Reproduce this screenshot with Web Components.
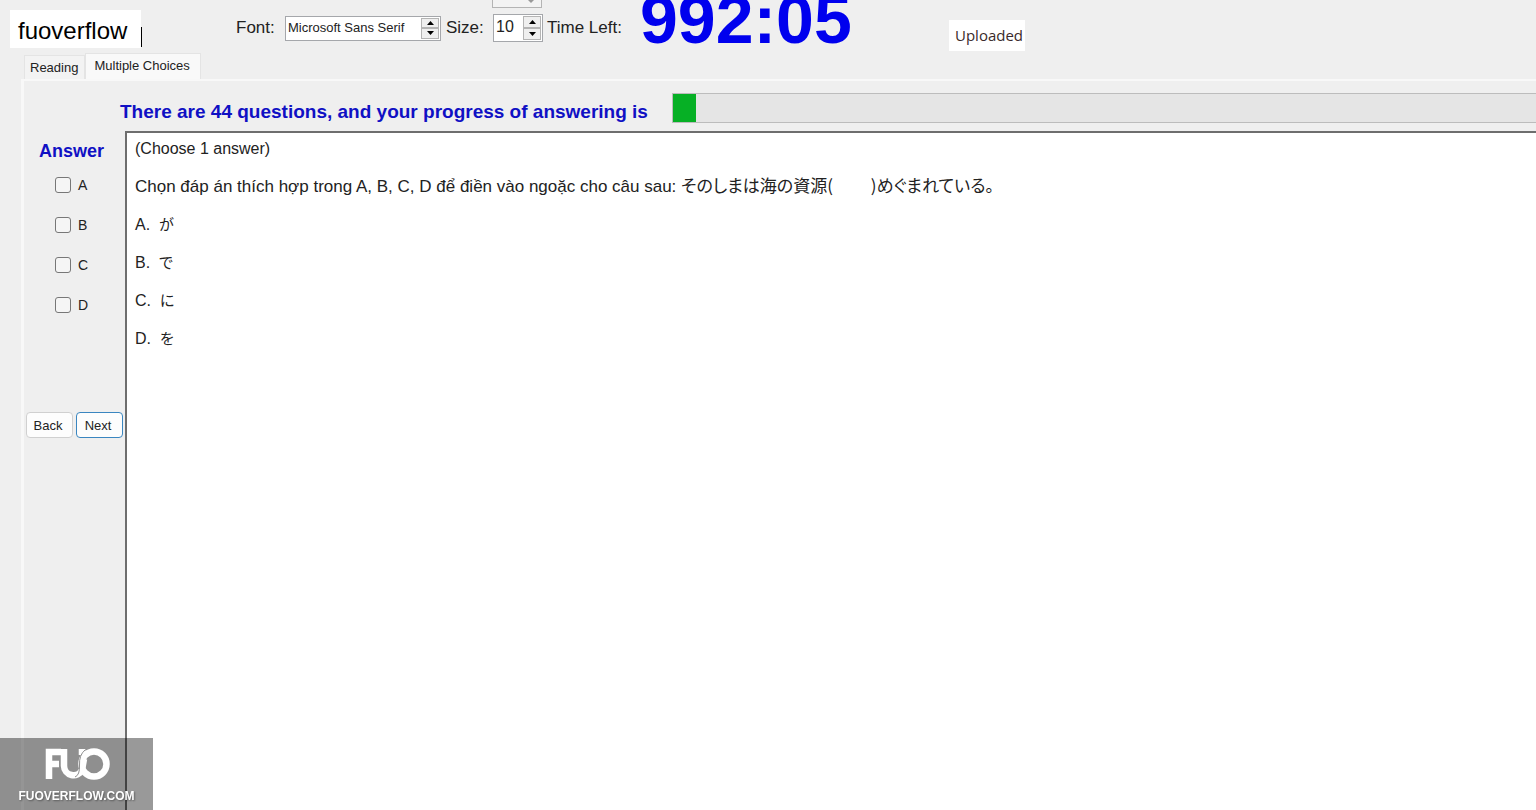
<!DOCTYPE html>
<html lang="vi">
<head>
<meta charset="utf-8">
<title>Multiple Choices</title>
<style>
  body {
    margin: 0;
    background: #efefef;
    color: #222;
    font-family: "Liberation Sans", "Noto Sans CJK JP", sans-serif;
    font-size: 13px;
  }
</style>
</head>
<body>
<exam-app></exam-app>

<script>
class SpinBox extends HTMLElement {
  constructor() {
    super();
    this.attachShadow({ mode: "open" });
    this.shadowRoot.innerHTML = `
      <style>
        :host { display: flex; align-items: center; color: #222; font-size: 17px; }
        .box {
          display: flex;
          box-sizing: border-box;
          width: var(--spin-width, 156px);
          height: var(--spin-height, 25px);
          padding: 1px;
          background: #fff;
          border: 1px solid #a5a7ab;
        }
        input {
          flex: 1;
          min-width: 0;
          padding: 0 0 2px 1px;
          border: 0;
          outline: 0;
          background: none;
          color: #222;
          font-family: inherit;
          font-size: var(--spin-font, 13px);
        }
        .arrows { display: flex; flex-direction: column; width: 18px; }
        button {
          flex: 1;
          display: flex;
          align-items: center;
          justify-content: center;
          min-height: 0;
          padding: 0;
          background: #efefef;
          border: 1px solid #b4b4b4;
        }
        svg { width: 7px; height: 4px; }
      </style>
      <label for="field"></label>
      <div class="box">
        <input id="field" type="text">
        <div class="arrows">
          <button type="button" aria-label="Up"><svg viewBox="0 0 7 4"><path d="M0 4 3.5 0 7 4z"/></svg></button>
          <button type="button" aria-label="Down"><svg viewBox="0 0 7 4"><path d="M0 0h7L3.5 4z"/></svg></button>
        </div>
      </div>
    `;
  }

  connectedCallback() {
    const label = this.shadowRoot.querySelector("label");
    label.textContent = this.getAttribute("label");
    label.style.width = this.getAttribute("label-width") + "px";
    this.shadowRoot.querySelector("input").value = this.getAttribute("value");
  }
}
customElements.define("spin-box", SpinBox);

class ExamHeader extends HTMLElement {
  constructor() {
    super();
    this.attachShadow({ mode: "open" });
    this.shadowRoot.innerHTML = `
      <style>
        :host { display: flex; align-items: center; height: 53px; padding-left: 10px; }
        .user {
          position: relative;
          width: 123px;
          height: 38px;
          padding-left: 8px;
          margin: 5px 95px 0 0;
          background: #fff;
          color: #000;
          font-size: 24px;
          line-height: 42px;
        }
        .user::after {
          content: "";
          position: absolute;
          left: 100%;
          bottom: 1px;
          width: 1px;
          height: 20px;
          background: #000;
        }
        .font { margin: 3px 5px 0 0; }
        .size {
          position: relative;
          margin: 3px 4px 0 0;
          --spin-width: 50px;
          --spin-height: 28px;
          --spin-font: 16px;
        }
        /* end of the row above, cut by the window edge */
        .size::before {
          content: "";
          position: absolute;
          right: 1px;
          bottom: calc(100% + 6px);
          box-sizing: border-box;
          width: 50px;
          height: 20px;
          background: #f3f3f3;
          border: 1px solid #b4b4b4;
        }
        .size::after {
          content: "";
          position: absolute;
          right: 8px;
          bottom: calc(100% + 11px);
          border: 4px solid transparent;
          border-top-color: #999;
          border-bottom: 0;
        }
        .left { width: 93px; padding-top: 3px; font-size: 17px; }
        .clock {
          width: 309px;
          padding-bottom: 15px;
          color: #00e;
          font-size: 68px;
          font-weight: bold;
          line-height: 38px;
        }
        .status {
          align-self: flex-end;
          width: 70px;
          margin-bottom: 2px;
          padding-left: 6px;
          background: #fff;
          color: #3a2a2a;
          font-family: "Open Sans", sans-serif;
          font-size: 15px;
          line-height: 31px;
        }
      </style>
      <div class="user">fuoverflow</div>
      <spin-box class="font" label="Font:" label-width="49" value="Microsoft Sans Serif"></spin-box>
      <spin-box class="size" label="Size:" label-width="47" value="10"></spin-box>
      <div class="left">Time Left:</div>
      <div class="clock">992:05</div>
      <div class="status">Uploaded</div>
    `;
  }
}
customElements.define("exam-header", ExamHeader);

class ExamTabs extends HTMLElement {
  constructor() {
    super();
    this.attachShadow({ mode: "open" });
    this.shadowRoot.innerHTML = `
      <style>
        :host { display: flex; flex-direction: column; flex: 1; margin-left: 21px; }
        nav { display: flex; align-items: flex-end; padding-left: 3px; }
        button {
          padding: 0 6px 0 5px;
          background: #f3f3f3;
          border: 1px solid #e4e4e4;
          border-bottom: 0;
          color: #222;
          font-family: inherit;
          font-size: 13px;
          line-height: 23px;
        }
        button[aria-selected=true] {
          padding: 0 10px 2px 8px;
          background: #f9f9f9;
        }
        .panel {
          display: flex;
          flex: 1;
          border-top: 2px solid #f8f8f8;
          border-left: 3px solid #f8f8f8;
        }
      </style>
      <nav role="tablist">
        <button type="button" role="tab" aria-selected="false">Reading</button>
        <button type="button" role="tab" aria-selected="true">Multiple Choices</button>
      </nav>
      <div class="panel" role="tabpanel"><slot></slot></div>
    `;
  }
}
customElements.define("exam-tabs", ExamTabs);

class ExamProgress extends HTMLElement {
  constructor() {
    super();
    this.attachShadow({ mode: "open" });
    this.shadowRoot.innerHTML = `
      <style>
        :host { display: flex; align-items: center; }
        label {
          flex: none;
          width: 552px;
          padding-top: 8px;
          color: #1010c4;
          font-size: 19px;
          font-weight: bold;
          line-height: 22px;
          white-space: nowrap;
        }
        progress {
          flex: 1;
          box-sizing: border-box;
          height: 30px;
          appearance: none;
          border: 1px solid #bcbcbc;
          border-right: 0;
          background: #e5e5e5;
        }
        progress::-webkit-progress-bar { background: #e5e5e5; }
        progress::-webkit-progress-value { background: #06b025; }
      </style>
      <label for="bar"><slot></slot></label>
      <progress id="bar" value="1" max="37"></progress>
    `;
  }
}
customElements.define("exam-progress", ExamProgress);

class AnswerPanel extends HTMLElement {
  constructor() {
    super();
    this.attachShadow({ mode: "open" });
    this.shadowRoot.innerHTML = `
      <style>
        :host { display: block; }
        h2 {
          margin: 10px 0 13px 15px;
          color: #1010c4;
          font-size: 18px;
          line-height: 20px;
        }
        label {
          display: flex;
          align-items: center;
          gap: 7px;
          height: 22px;
          margin: 0 0 18px 31px;
          font-size: 14px;
        }
        input {
          appearance: none;
          box-sizing: border-box;
          width: 16px;
          height: 16px;
          margin: 0;
          background: #f5f5f5;
          border: 1px solid #777;
          border-radius: 3px;
        }
        .buttons { display: flex; gap: 3px; margin: 96px 0 0 2px; }
        button {
          width: 47px;
          height: 26px;
          padding: 0 3px 0 0;
          background: #fdfdfd;
          border: 1px solid #d0d0d0;
          border-radius: 4px;
          color: #222;
          font-family: inherit;
          font-size: 13px;
        }
        .next { border-color: #3a86c0; }
      </style>
      <h2>Answer</h2>
      <label><input type="checkbox">A</label>
      <label><input type="checkbox">B</label>
      <label><input type="checkbox">C</label>
      <label><input type="checkbox">D</label>
      <div class="buttons">
        <button type="button">Back</button>
        <button type="button" class="next">Next</button>
      </div>
    `;
  }
}
customElements.define("answer-panel", AnswerPanel);

class QuestionView extends HTMLElement {
  constructor() {
    super();
    this.attachShadow({ mode: "open" });
    this.shadowRoot.innerHTML = `
      <style>
        :host {
          display: block;
          padding: 5px 0 0 8px;
          background: #fff;
          border-top: 2px solid #6e6e6e;
          border-left: 2px solid #6e6e6e;
          font-size: 16px;
        }
        p { margin: 0 0 16px; line-height: 22px; white-space: pre-wrap; }
        .question { font-size: 17px; }
        [lang=ja] {
          font-family: "Noto Sans CJK JP", sans-serif;
          font-feature-settings: "palt";
          line-height: 1;
        }
        .option [lang=ja] { font-size: 15px; }
      </style>
      <p>(Choose 1 answer)</p>
      <p class="question">Chọn đáp án thích hợp trong A, B, C, D để điền vào ngoặc cho câu sau: <span lang="ja">そのしまは海の資源(　　 )めぐまれている。</span></p>
      <p class="option">A.  <span lang="ja">が</span></p>
      <p class="option">B.  <span lang="ja">で</span></p>
      <p class="option">C.  <span lang="ja">に</span></p>
      <p class="option">D.  <span lang="ja">を</span></p>
    `;
  }
}
customElements.define("question-view", QuestionView);

class SiteBadge extends HTMLElement {
  constructor() {
    super();
    this.attachShadow({ mode: "open" });
    this.shadowRoot.innerHTML = `
      <style>
        :host {
          position: fixed;
          left: 0;
          bottom: 0;
          display: flex;
          flex-direction: column;
          align-items: center;
          box-sizing: border-box;
          width: 153px;
          height: 72px;
          padding-top: 9px;
          background: rgba(0, 0, 0, .4);
          color: #fff;
          font-size: 12px;
          font-weight: 900;
          line-height: 18px;
          text-shadow: 1px 1px 2px rgba(0, 0, 0, .4);
        }
        svg { width: 66px; height: 34px; margin-bottom: 6px; }
      </style>
      <svg viewBox="0 0 66 34" fill="none" stroke="#fff" stroke-width="6.500" role="img" aria-label="FUO">
        <path d="M5 32V5H17M5 17H15"/>
        <path d="M20 2V19A9.500 9.500 0 0 0 38 23L40 12"/>
        <path d="M38 2V8"/>
        <circle cx="50" cy="17" r="12.500"/>
        <path d="M41 3Q35 8 35.500 18T31 30" stroke="#8f8f8f" stroke-width="1"/>
      </svg>
      <span>FUOVERFLOW.COM</span>
    `;
  }
}
customElements.define("site-badge", SiteBadge);

class ExamApp extends HTMLElement {
  constructor() {
    super();
    this.attachShadow({ mode: "open" });
    this.shadowRoot.innerHTML = `
      <style>
        :host { display: flex; flex-direction: column; min-height: 100vh; }
        .content {
          flex: 1;
          display: grid;
          grid-template-columns: 101px 1fr;
          grid-template-rows: auto 1fr;
          row-gap: 8px;
          padding-top: 12px;
        }
        exam-progress { grid-column: 1 / -1; padding-left: 96px; }
      </style>
      <exam-header></exam-header>
      <exam-tabs>
        <div class="content">
          <exam-progress>There are 44 questions, and your progress of answering is</exam-progress>
          <answer-panel></answer-panel>
          <question-view></question-view>
        </div>
      </exam-tabs>
      <site-badge></site-badge>
    `;
  }
}
customElements.define("exam-app", ExamApp);
</script>
</body>
</html>
